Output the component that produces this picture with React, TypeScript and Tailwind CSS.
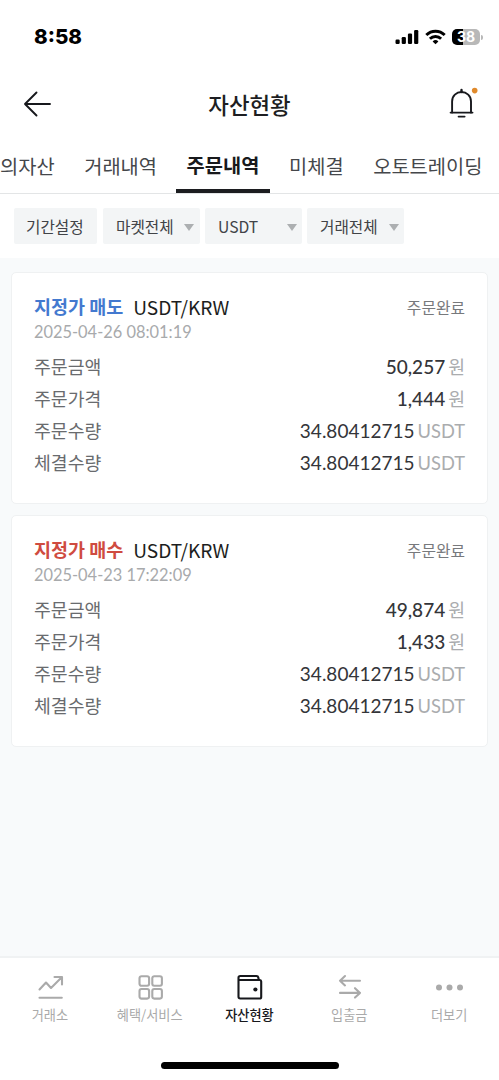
import type { ReactNode } from 'react'

const tabs = ['의자산', '거래내역', '주문내역', '미체결', '오토트레이딩']

const orders = [
  {
    side: '지정가 매도',
    sideColor: 'text-[#4379cf]',
    date: '2025-04-26 08:01:19',
    amount: '50,257',
    price: '1,444',
  },
  {
    side: '지정가 매수',
    sideColor: 'text-[#cf4b40]',
    date: '2025-04-23 17:22:09',
    amount: '49,874',
    price: '1,433',
  },
]

function StatusBar() {
  return (
    <div className="flex h-[72px] items-center justify-between pl-[34px] pr-[16px] pt-[2px]">
      <span className="font-['Inter',sans-serif] text-[20.6px] font-extrabold leading-none text-black">8:58</span>
      <div className="flex items-center">
        <svg width="24" height="16" viewBox="0 0 24 16" className="mr-[6px]">
          <rect x="0.5" y="10.5" width="4.2" height="4.5" rx="1.2" />
          <rect x="6.7" y="8" width="4.2" height="7" rx="1.2" />
          <rect x="12.9" y="4.5" width="4.2" height="10.5" rx="1.2" />
          <rect x="19.1" y="1" width="4.2" height="14" rx="1.2" />
        </svg>
        <svg width="21" height="16" viewBox="0 0 21 16" className="mr-[6px]" fill="none" stroke="black" strokeWidth="2.9">
          <path d="M1.3 6.1a13 13 0 0 1 18.4 0" />
          <path d="M4.9 9.8a8 8 0 0 1 11.2 0" />
          <path d="M10.5 15.3 7.6 12.4a4.2 4.2 0 0 1 5.8 0Z" fill="black" stroke="none" />
        </svg>
        <div className="flex items-center">
          <div className="flex h-4 w-7 items-center justify-center rounded-[5px] bg-[linear-gradient(90deg,#000_38%,#b8b8b8_38%)] font-['Inter',sans-serif] text-[14px] font-bold leading-none text-white">
            38
          </div>
          <div className="ml-px h-[5px] w-[2px] rounded-r-full bg-[#b8b8b8]" />
        </div>
      </div>
    </div>
  )
}

function Header() {
  return (
    <header className="grid h-[64px] grid-cols-[1fr_auto_1fr] items-center pl-[23px] pr-[21px]">
      <svg width="28" height="26" viewBox="0 0 28 26" fill="none" stroke="#17181c" strokeWidth="1.9" strokeLinecap="round" strokeLinejoin="round">
        <path d="M27 13H2M13.5 1.5 2 13l11.5 11.5" />
      </svg>
      <h1 className="-ml-0.5 text-[22.4px] font-medium leading-none text-[#1d1e22]">자산현황</h1>
      <svg width="30" height="34" viewBox="0 0 30 34" className="justify-self-end" fill="none" stroke="#17181c" strokeWidth="1.9" strokeLinecap="round">
        <path d="M13.5 3v2" strokeWidth="2.4" />
        <path d="M4.1 25.5V14.4C4.1 8.8 8.4 5 13.500 5s9.500 3.800 9.500 9.400v11.100" />
        <path d="M2.600 25.600h21.900M10.600 29.600h6" />
        <circle cx="26.700" cy="3.600" r="2.800" fill="#e08a2c" stroke="none" />
      </svg>
    </header>
  )
}

function Tabs() {
  return (
    <nav className="flex h-[58px] border-b border-[#e3e5e6]">
      {tabs.map((tab) => (
        <button
          key={tab}
          className={
            tab === '주문내역'
              ? 'mx-1 shrink-0 border-b-4 border-[#1c1d20] px-[10.8px] pt-1 text-[19.8px] font-bold text-[#18191c]'
              : 'shrink-0 px-[14.8px] pt-0.5 text-[19.8px] text-[#45474b] first:pl-0'
          }
        >
          {tab}
        </button>
      ))}
    </nav>
  )
}

function Filter({ label, arrow = true, className }: { label: string; arrow?: boolean; className: string }) {
  return (
    <button className={`flex h-9 items-center justify-between rounded-[2px] bg-[#f3f5f6] pt-0.5 text-[15.7px] leading-none text-[#414347] ${className}`}>
      {label}
      {arrow && (
        <svg width="10" height="7" viewBox="0 0 10 7" fill="#acafb1" className="mt-px">
          <path d="M0 0h10L5 7Z" />
        </svg>
      )}
    </button>
  )
}

function Row({ label, value, unit, strong }: { label: string; value: string; unit: string; strong?: boolean }) {
  return (
    <div className="flex h-8 items-center justify-between">
      <span className="text-[18.3px] text-[#696b6e]">{label}</span>
      <span className="flex items-baseline gap-[3px]">
        <span className={`font-['Lato',sans-serif] text-[19px] text-[#343539] ${strong ? 'font-medium' : ''}`}>{value}</span>
        <span className="font-['Lato','Noto_Sans_CJK_KR',sans-serif] text-[18.3px] text-[#aaacae]">{unit}</span>
      </span>
    </div>
  )
}

function OrderCard({ order }: { order: (typeof orders)[number] }) {
  return (
    <section className="h-[232px] rounded-[5px] border border-[#eff1f2] bg-white px-[22px] pt-[21px]">
      <div className="flex h-[28px] items-center justify-between">
        <div className="-mt-0.5 flex items-center gap-[10px]">
          <span className={`text-[18.5px] font-bold ${order.sideColor}`}>{order.side}</span>
          <span className="text-[19.1px] text-[#1c1d20]">USDT/KRW</span>
        </div>
        <span className="text-[15.8px] text-[#77797c]">주문완료</span>
      </div>
      <div className="-mt-px mb-[8px] h-[22px] font-['Lato',sans-serif] text-[16.4px] leading-[22px] text-[#a8aaac]">{order.date}</div>
      <Row label="주문금액" value={order.amount} unit="원" strong />
      <Row label="주문가격" value={order.price} unit="원" strong />
      <Row label="주문수량" value="34.80412715" unit="USDT" />
      <Row label="체결수량" value="34.80412715" unit="USDT" />
    </section>
  )
}

function NavItem({ label, active, children }: { label: string; active?: boolean; children: ReactNode }) {
  return (
    <button className={`flex flex-1 flex-col items-center ${active ? 'font-medium text-[#17181c]' : 'text-[#aaaaaa]'}`}>
      <svg width="30" height="30" viewBox="0 0 30 30" fill="none" stroke="currentColor" strokeWidth="2.1" strokeLinecap="round" strokeLinejoin="round">
        {children}
      </svg>
      <span className="mt-[3px] text-[13.2px] leading-[20px]">{label}</span>
    </button>
  )
}

function BottomNav() {
  return (
    <footer className="flex h-[124px] flex-col border-t-2 border-[#f0f2f3] bg-white pt-[14px]">
      <nav className="flex">
        <NavItem label="거래소">
          <path d="M4.500 17.500 11 10.500l5 5.500L26.500 5.500M19.500 5h7.500v7.500M4.500 25.800h22.300" />
        </NavItem>
        <NavItem label="혜택/서비스">
          <rect x="4.500" y="4.200" width="9.600" height="9.600" rx="2" />
          <rect x="17.300" y="4.200" width="9.600" height="9.600" rx="2" />
          <rect x="4.500" y="17" width="9.600" height="9.600" rx="2" />
          <rect x="17.300" y="17" width="9.600" height="9.600" rx="2" />
        </NavItem>
        <NavItem label="자산현황" active>
          <path d="M4.500 8V5.700Q4.500 4 6.200 4h16.300Q24 4 24.300 5.500l.5 2.500M4.500 8h21.400Q27.200 8 27.200 9.500v15.400Q27.200 26.500 25.600 26.500H6.200Q4.500 26.500 4.500 24.800Z" />
          <circle cx="21.400" cy="17.500" r="2.100" fill="currentColor" stroke="none" />
        </NavItem>
        <NavItem label="입출금">
          <path d="M26 8.700H6M11 4 6 8.700l5 4.700M6 20.900h20M21 16.200l5 4.700-5 4.700" />
        </NavItem>
        <NavItem label="더보기">
          <g fill="currentColor" stroke="none">
            <circle cx="5" cy="15.500" r="3" />
            <circle cx="15.500" cy="15.500" r="3" />
            <circle cx="26" cy="15.500" r="3" />
          </g>
        </NavItem>
      </nav>
      <div className="mx-auto mb-[11px] mt-auto h-[7px] w-[178px] rounded-full bg-black" />
    </footer>
  )
}

export default function App() {
  return (
    <div className="flex h-[1080px] w-[499px] flex-col overflow-hidden bg-white font-['Noto_Sans_CJK_KR',sans-serif]">
      <StatusBar />
      <Header />
      <Tabs />
      <div className="flex h-16 items-center gap-[5px] px-[14px]">
        <Filter label="기간설정" arrow={false} className="mr-px w-[83px] px-3" />
        <Filter label="마켓전체" className="w-[97px] pl-[13px] pr-[6px]" />
        <Filter label="USDT" className="w-[97px] pl-[13px] pr-[5px]" />
        <Filter label="거래전체" className="w-[97px] pl-[13px] pr-[5px]" />
      </div>
      <main className="flex flex-1 flex-col gap-[11px] bg-[#f8fafb] px-[11px] pt-[14px]">
        {orders.map((order) => (
          <OrderCard key={order.date} order={order} />
        ))}
      </main>
      <BottomNav />
    </div>
  )
}
